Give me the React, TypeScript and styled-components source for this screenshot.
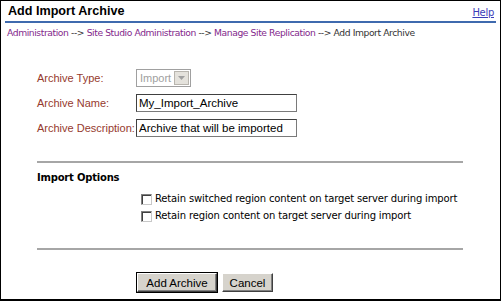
import React from "react";
import styled, { createGlobalStyle } from "styled-components";

const Global = createGlobalStyle`
  html, body { margin: 0; padding: 0; background: #fff; }
  * { box-sizing: border-box; }
`;

const Frame = styled.div`
  width: 501px;
  height: 301px;
  border: 1px solid #000;
  border-bottom-width: 2px;
  background: #fff;
  font-family: "Liberation Sans", Arial, sans-serif;
  overflow: hidden;
`;

const Header = styled.div`
  display: flex;
  justify-content: space-between;
  align-items: flex-end;
  margin: 0 4px 0 4px;
  padding: 4px 2px 2px 3px;
  border-bottom: 2px solid #3f6aae;
  height: 22px;
`;

const Title = styled.h1`
  margin: 0;
  font-family: "Liberation Sans", Arial, sans-serif;
  font-weight: bold;
  font-size: 12.6px;
  color: #000;
  line-height: 15px;
`;

const HelpLink = styled.a`
  font-family: "DejaVu Sans", Verdana, sans-serif;
  font-size: 10px;
  letter-spacing: -0.3px;
  color: #3c3cb8;
  text-decoration: underline;
  line-height: 13px;
`;

const Crumbs = styled.div`
  margin: 4px 0 0 6px;
  font-family: "DejaVu Sans", Verdana, sans-serif;
  font-size: 9.2px;
  letter-spacing: -0.41px;
  color: #333;
  line-height: 12px;
  white-space: nowrap;
`;

const Crumb = styled.a`
  color: #83288c;
  text-decoration: none;
`;

const Body = styled.div`
  margin: 30px 0 0 36px;
  width: 426px;
`;

const Fields = styled.div`
  display: grid;
  grid-template-columns: 99px auto;
  row-gap: 7px;
  align-items: center;
`;

const Label = styled.label`
  font-size: 11px;
  color: #963a2e;
`;

const SelectBox = styled.div`
  display: flex;
  width: 55px;
  height: 18px;
  border: 1px solid #a0a0a0;
  background: #fff;
  font-size: 11px;
  color: #a0a0a0;
  align-items: stretch;
`;

const SelectText = styled.span`
  flex: 1;
  padding: 1px 0 0 3px;
  line-height: 14px;
`;

const SelectArrow = styled.span`
  width: 15px;
  margin: 1px;
  background: #e4e2dc;
  border: 1px solid #b8b5ae;
  display: flex;
  align-items: center;
  justify-content: center;
`;

const TextInput = styled.input`
  width: 161px;
  height: 18px;
  border: 1px solid #7a7a7a;
  border-top-color: #404040;
  border-left-color: #404040;
  font-family: "Liberation Sans", Arial, sans-serif;
  font-size: 11.5px;
  color: #000;
  padding: 0 2px;
  outline: none;
`;

const Rule = styled.div<{ $top: number }>`
  margin-top: ${(p) => p.$top}px;
  height: 2px;
  background: #a6a6a6;
`;

const SectionTitle = styled.div`
  margin-top: 9px;
  font-family: "DejaVu Sans", Verdana, sans-serif;
  font-weight: bold;
  font-size: 10px;
  letter-spacing: -0.2px;
  color: #000;
`;

const Options = styled.div`
  margin: 10px 0 0 104px;
  display: flex;
  flex-direction: column;
  gap: 5px;
`;

const Option = styled.label`
  display: flex;
  align-items: center;
  gap: 3px;
  font-family: "DejaVu Sans", Verdana, sans-serif;
  font-size: 10px;
  letter-spacing: -0.15px;
  color: #000;
  line-height: 12px;
`;

const Box = styled.span`
  width: 11px;
  height: 11px;
  border: 1px solid #808080;
  border-right-color: #c8c8c8;
  border-bottom-color: #c8c8c8;
  background: #fff;
  box-shadow: inset 1px 1px 0 #404040;
`;

const Buttons = styled.div`
  margin: 23px 0 0 99px;
  display: flex;
  gap: 5px;
`;

const Button = styled.button<{ $default?: boolean; $w: number }>`
  width: ${(p) => p.$w}px;
  height: 19px;
  padding: 0;
  font-family: "Liberation Sans", Arial, sans-serif;
  font-size: 11.5px;
  color: #000;
  background: #d6d3cc;
  border: 1px solid;
  border-color: #fff #404040 #404040 #fff;
  box-shadow: ${(p) =>
    p.$default ? "0 0 0 1px #000, inset -1px -1px 0 #808080" : "inset -1px -1px 0 #808080"};
  ${(p) => (p.$default ? "margin-left: 1px;" : "")}
`;

const Arrow = () => (
  <svg width="7" height="4" viewBox="0 0 7 4">
    <path d="M0 0h7L3.5 4z" fill="#a0a0a0" />
  </svg>
);

export default function App() {
  return (
    <>
      <Global />
      <Frame>
        <Header>
          <Title>Add Import Archive</Title>
          <HelpLink href="#">Help</HelpLink>
        </Header>
        <Crumbs>
          <Crumb href="#">Administration</Crumb> --&gt;{" "}
          <Crumb href="#">Site Studio Administration</Crumb> --&gt;{" "}
          <Crumb href="#">Manage Site Replication</Crumb> --&gt; Add Import Archive
        </Crumbs>
        <Body>
          <Fields>
            <Label>Archive Type:</Label>
            <SelectBox>
              <SelectText>Import</SelectText>
              <SelectArrow>
                <Arrow />
              </SelectArrow>
            </SelectBox>
            <Label>Archive Name:</Label>
            <TextInput defaultValue="My_Import_Archive" />
            <Label>Archive Description:</Label>
            <TextInput defaultValue="Archive that will be imported" />
          </Fields>
          <Rule $top={24} />
          <SectionTitle>Import Options</SectionTitle>
          <Options>
            <Option>
              <Box />
              Retain switched region content on target server during import
            </Option>
            <Option>
              <Box />
              Retain region content on target server during import
            </Option>
          </Options>
          <Rule $top={26} />
          <Buttons>
            <Button $default $w={80}>Add Archive</Button>
            <Button $w={51}>Cancel</Button>
          </Buttons>
        </Body>
      </Frame>
    </>
  );
}
